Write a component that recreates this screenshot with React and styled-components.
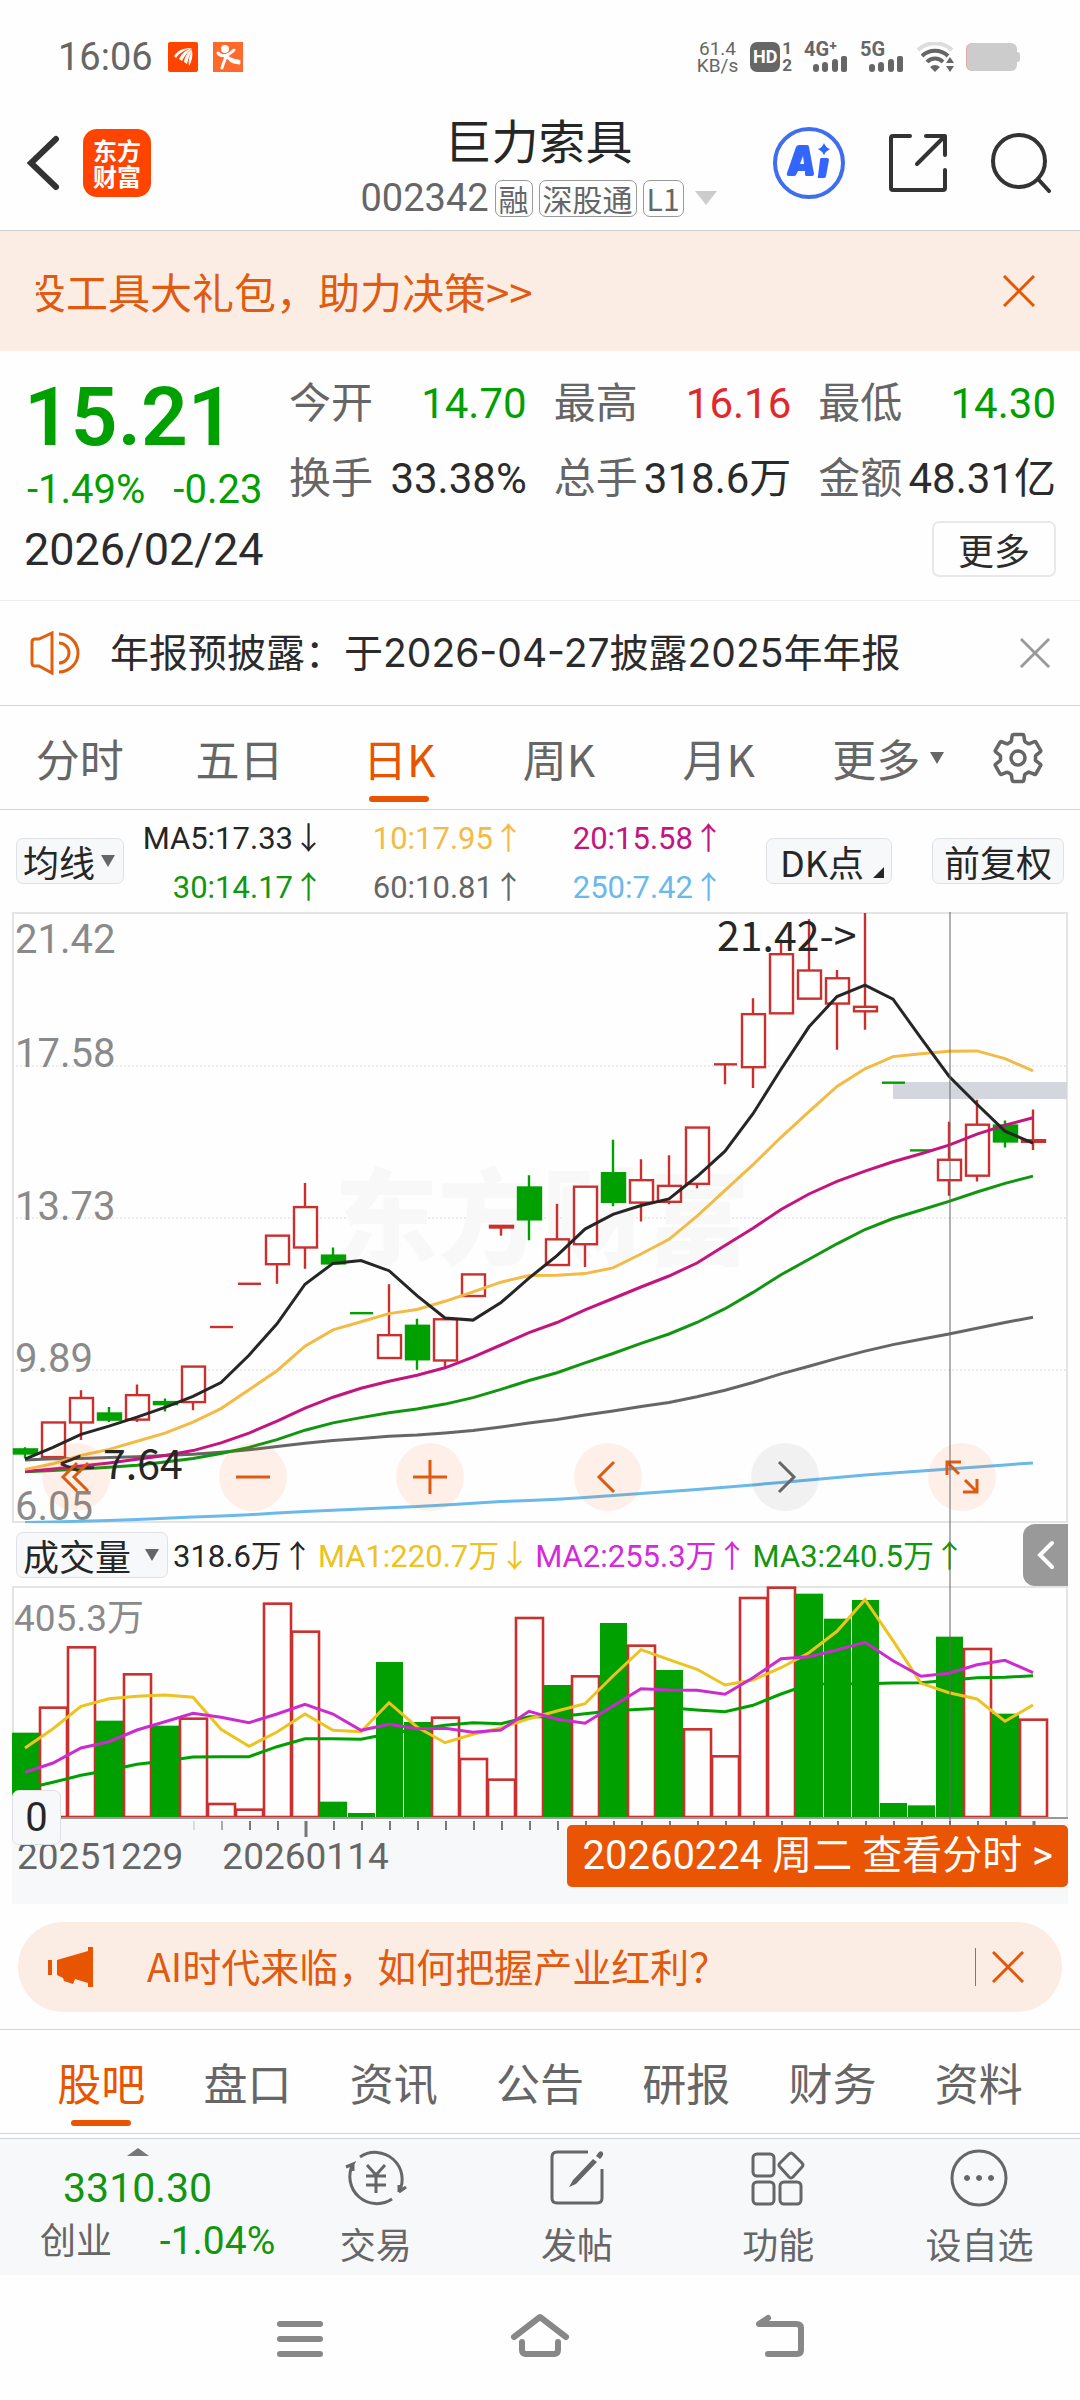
import React, { useState } from "react";
import styled, { createGlobalStyle } from "styled-components";
import { IoSettingsOutline } from "react-icons/io5";

const RED = "#c9302e";
const GREEN = "#00a000";
const ORANGE = "#e85400";
const NUMBERS = '"Roboto", "Noto Sans CJK SC", sans-serif';

// x of the first bar and the distance between two bars
const FIRST = 13;
const STEP = 28;

// [color, high, top, bottom, low], levels counted down from the top (28 = 21.42, 1521 = 6.05)
const candles = [
	["g", 1338, 1343, 1353, 1365],
	["r", 1277, 1277, 1362, 1362],
	["r", 1198, 1217, 1277, 1320],
	["g", 1239, 1255, 1270, 1276],
	["r", 1184, 1210, 1270, 1276],
	["g", 1218, 1227, 1232, 1250],
	["r", 1140, 1140, 1227, 1247],
	["r", 1043, 1043, 1043, 1043],
	["r", 937, 937, 937, 937],
	["r", 819, 819, 889, 937],
	["r", 690, 749, 848, 900],
	["g", 848, 868, 887, 887],
	["g", 1009, 1009, 1009, 1009],
	["r", 938, 1063, 1119, 1119],
	["g", 1023, 1040, 1122, 1148],
	["r", 1024, 1024, 1125, 1142],
	["r", 914, 914, 967, 967],
	["r", 795, 795, 799, 819],
	["g", 671, 701, 779, 830],
	["r", 741, 828, 891, 891],
	["r", 699, 699, 840, 896],
	["g", 584, 666, 736, 747],
	["r", 632, 683, 738, 784],
	["r", 622, 697, 736, 742],
	["r", 554, 554, 692, 703],
	["r", 399, 399, 399, 448],
	["r", 237, 276, 406, 457],
	["r", 93, 129, 274, 274],
	["r", 43, 169, 238, 238],
	["r", 168, 188, 250, 363],
	["r", 28, 258, 269, 314],
	["g", 444, 444, 444, 444],
	["g", 610, 610, 610, 610],
	["r", 540, 633, 683, 721],
	["r", 486, 547, 672, 686],
	["g", 537, 549, 588, 603],
	["r", 510, 585, 589, 609],
];

const priceLines = [
	{
		color: "#6bb9ea",
		values: [
			1522, 1521, 1519, 1517, 1515, 1512, 1509, 1506, 1503, 1499, 1495, 1492, 1489, 1486, 1483, 1479, 1475, 1471, 1468,
			1465, 1461, 1456, 1451, 1446, 1441, 1436, 1430, 1424, 1418, 1412, 1406, 1401, 1396, 1391, 1386, 1381, 1376,
		],
	},
	{
		color: "#666",
		values: [
			1369, 1366, 1365, 1363, 1361, 1358, 1355, 1350, 1344, 1336, 1328, 1321, 1316, 1311, 1308, 1303, 1297, 1288, 1278,
			1270, 1259, 1249, 1238, 1228, 1214, 1198, 1179, 1158, 1139, 1120, 1102, 1086, 1073, 1060, 1046, 1032, 1019,
		],
	},
	{
		color: "#12960f",
		values: [
			1398, 1395, 1391, 1387, 1382, 1374, 1365, 1353, 1338, 1319, 1296, 1278, 1265, 1253, 1244, 1232, 1216, 1196, 1174,
			1155, 1131, 1108, 1083, 1060, 1032, 998, 958, 915, 877, 839, 804, 777, 756, 735, 712, 691, 673,
		],
	},
	{
		color: "#c4157f",
		values: [
			1397, 1391, 1384, 1376, 1367, 1358, 1346, 1327, 1303, 1274, 1242, 1215, 1193, 1176, 1161, 1143, 1117, 1087, 1057,
			1032, 1001, 973, 945, 918, 886, 843, 801, 755, 717, 686, 661, 638, 618, 597, 570, 548, 530,
		],
	},
	{
		color: "#f3bb45",
		values: [
			1392, 1378, 1358, 1343, 1323, 1303, 1276, 1243, 1197, 1150, 1090, 1050, 1030, 1010, 1000, 980, 957, 933, 917, 916,
			912, 898, 864, 828, 771, 708, 645, 578, 515, 453, 410, 380, 373, 367, 366, 385, 415,
		],
	},
	{
		color: "#262626",
		values: [
			1367, 1338, 1306, 1286, 1264, 1240, 1213, 1179, 1112, 1035, 938, 887, 880, 905, 966, 1021, 1026, 983, 923, 868, 803,
			767, 745, 729, 674, 612, 520, 411, 307, 233, 205, 239, 335, 428, 497, 563, 592,
		],
	},
];

// [color, top], 225 = 405.3万, 918 = 0
const volumes = [
	["g", 662], ["r", 587], ["r", 406], ["g", 626], ["r", 487], ["g", 641], ["r", 620], ["r", 876], ["r", 893],
	["r", 275], ["r", 359], ["g", 869], ["g", 903], ["g", 450], ["g", 630], ["r", 617], ["r", 741], ["r", 803],
	["r", 318], ["g", 519], ["r", 493], ["g", 333], ["r", 401], ["g", 474], ["r", 652], ["r", 733], ["r", 258],
	["r", 227], ["g", 245], ["g", 320], ["g", 264], ["g", 873], ["g", 880], ["g", 374], ["r", 411], ["g", 605],
	["r", 623],
];

const volumeLines = [
	{
		color: GREEN,
		values: [
			830, 811, 790, 775, 757, 747, 735, 734, 734, 704, 680, 680, 682, 665, 652, 640, 632, 635, 614, 614, 605, 596, 592,
			587, 594, 599, 580, 546, 517, 515, 515, 513, 512, 505, 497, 496, 491,
		],
	},
	{
		color: "#edc31f",
		values: [
			708, 650, 583, 560, 553, 549, 556, 652, 703, 660, 606, 655, 659, 572, 645, 692, 667, 648, 620, 597, 575, 492, 413,
			443, 472, 519, 504, 467, 422, 358, 263, 386, 514, 542, 561, 628, 579,
		],
	},
	{
		color: "#cc2bcf",
		values: [
			781, 753, 708, 689, 654, 629, 604, 616, 632, 606, 577, 606, 655, 637, 650, 649, 661, 654, 598, 622, 634, 582, 530,
			534, 535, 547, 497, 440, 434, 414, 391, 446, 493, 484, 458, 445, 482,
		],
	},
];

const quotes = [
	{ label: "今开", value: "14.70", color: "#00a000" },
	{ label: "最高", value: "16.16", color: "#e02a2a" },
	{ label: "最低", value: "14.30", color: "#00a000" },
	{ label: "换手", value: "33.38%", color: "#2b2b2b" },
	{ label: "总手", value: "318.6万", color: "#2b2b2b" },
	{ label: "金额", value: "48.31亿", color: "#2b2b2b" },
];

const averages = [
	{ text: "MA5:17.33", arrow: "↓", color: "#262626" },
	{ text: "10:17.95", arrow: "↑", color: "#f3bb45" },
	{ text: "20:15.58", arrow: "↑", color: "#c4157f" },
	{ text: "30:14.17", arrow: "↑", color: "#12960f" },
	{ text: "60:10.81", arrow: "↑", color: "#666" },
	{ text: "250:7.42", arrow: "↑", color: "#6bb9ea" },
];

const volumeLegend = [
	{ text: "318.6万", arrow: "↑", color: "#262626" },
	{ text: "MA1:220.7万", arrow: "↓", color: "#edc31f" },
	{ text: "MA2:255.3万", arrow: "↑", color: "#d42bd8" },
	{ text: "MA3:240.5万", arrow: "↑", color: "#12960f" },
];

const priceLabels = [
	{ text: "21.42", y: 41 },
	{ text: "17.58", y: 155 },
	{ text: "13.73", y: 308 },
	{ text: "9.89", y: 460 },
	{ text: "6.05", y: 608 },
];

const periods = ["分时", "五日", "日K", "周K", "月K"];
const sections = ["股吧", "盘口", "资讯", "公告", "研报", "财务", "资料"];

const barX = (i) => FIRST + STEP * i;
const priceY = (v) => ((v - 28) / 1493) * 609 + 1;
const volumeY = (v) => (v - 225) / 3 + 1;
const toPoints = (values, scale) => values.map((v, i) => `${barX(i)},${scale(v).toFixed(1)}`).join(" ");

function CloseIcon({ size, color }) {
	return (
		<svg width={size} height={size} viewBox='0 0 32 32' fill='none' stroke={color} strokeWidth='3'>
			<path d='M1 1L31 31M31 1L1 31' />
		</svg>
	);
}

function Signal() {
	return (
		<svg width='36' height='16' viewBox='0 0 36 16' fill='#666'>
			<rect x='1' y='8' width='6' height='8' rx='3' />
			<rect x='10' y='6' width='6' height='10' rx='3' />
			<rect x='20' y='3' width='6' height='13' rx='3' />
			<rect x='29' y='0' width='6' height='16' rx='2' />
		</svg>
	);
}

function StatusBar() {
	return (
		<StStatus>
			<StClock>16:06</StClock>
			<svg width='30' height='30' viewBox='0 0 30 30'>
				<rect width='30' height='30' rx='2' fill='#ff4400' />
				<path d='M6 14C10 8 16 6 23 6 17 8 11 11 8 16ZM11 17C14 11 18 8 24 6 20 10 16 14 14 19ZM16 20C17 14 20 10 24 7 22 12 20 17 19 22ZM21 24C20 18 22 12 24 8 25 14 24 19 21 24Z' fill='#fff' />
			</svg>
			<svg width='30' height='30' viewBox='0 0 30 30'>
				<rect width='30' height='30' fill='#ff6a2c' />
				<circle cx='12' cy='7' r='4' fill='#fff' />
				<path d='M5 11C8 15 14 15 21 8M14 15C18 18 23 19 26 19M13 15C11 20 10 22 9 26M16 16C18 20 21 20 26 21' fill='none' stroke='#fff' strokeWidth='3' strokeLinecap='round' />
			</svg>
			<StStatusRight>
				<StSpeed>
					<span>61.4</span>
					<span>KB/s</span>
				</StSpeed>
				<StHd>HD</StHd>
				<StSims>
					<span>1</span>
					<span>2</span>
				</StSims>
				<StNet>
					<span>4G⁺</span>
					<Signal />
				</StNet>
				<StNet>
					<span>5G</span>
					<Signal />
				</StNet>
				<svg width='38' height='30' viewBox='0 0 38 30' fill='none' strokeWidth='4'>
					<path d='M2 8A25 25 0 0 1 36 8' stroke='#ddd' />
					<path d='M6 14A19 19 0 0 1 32 14' stroke='#666' />
					<path d='M11 20A11 11 0 0 1 27 20' stroke='#666' />
					<path d='M14 25Q19 21 24 25L19 30Z' fill='#666' />
					<path d='M30 21L34 15 38 21ZM30 24H38L34 30Z' fill='#666' />
				</svg>
				<svg width='54' height='28' viewBox='0 0 54 28'>
					<rect width='14' height='28' rx='6' fill='#e8a8a4' />
					<rect x='1' width='50' height='28' rx='6' fill='#ccc' />
					<rect x='48' y='9' width='6' height='10' rx='3' fill='#ccc' />
				</svg>
			</StStatusRight>
		</StStatus>
	);
}

function Header() {
	return (
		<StHeader>
			<StHeaderSide>
				<StIconButton aria-label='返回'>
					<svg width='34' height='56' viewBox='0 0 34 56' fill='none' stroke='#333' strokeWidth='6' strokeLinecap='round'>
						<path d='M30 4L5 28 30 52' />
					</svg>
				</StIconButton>
				<StLogo>
					东方
					<br />
					财富
				</StLogo>
			</StHeaderSide>
			<StTitleBox>
				<h1>巨力索具</h1>
				<StCode>
					<span>002342</span>
					<StTag>融</StTag>
					<StTag>深股通</StTag>
					<StTag>L1</StTag>
					<svg width='22' height='14' viewBox='0 0 22 14' fill='#ccc'>
						<path d='M0 0H22L11 14Z' />
					</svg>
				</StCode>
			</StTitleBox>
			<StHeaderSide $end>
				<StIconButton aria-label='Ai'>
					<svg width='72' height='72' viewBox='0 0 72 72'>
						<circle cx='36' cy='36' r='34' fill='none' stroke='#3f6df0' strokeWidth='4' />
						<path fillRule='evenodd' d='M23 20Q24 18 26 18H34Q36 18 36 20L41 47Q41 49 39 49H33Q32 49 32 47V44H25L23 48Q22 49 21 49H16Q13 49 14 46ZM27 37H31L30 29Z' fill='#3366ff' />
						<path d='M48 31H54Q56 31 56 33L53 49Q53 51 51 51H46Q44 51 45 49L47 33Q47 31 48 31Z' fill='#3366ff' />
						<path d='M51 16Q53 21 57 22 53 24 51 28 49 24 45 22 49 21 51 16Z' fill='#3366ff' />
					</svg>
				</StIconButton>
				<StIconButton aria-label='分享'>
					<svg width='60' height='60' viewBox='0 0 60 60' fill='none' stroke='#333' strokeWidth='4' strokeLinecap='round' strokeLinejoin='round'>
						<path d='M22 3H5Q3 3 3 5V55Q3 57 5 57H55Q57 57 57 55V37M38 3H57V22M57 3L29 31' />
					</svg>
				</StIconButton>
				<StIconButton aria-label='搜索'>
					<svg width='60' height='60' viewBox='0 0 60 60' fill='none' stroke='#333' strokeWidth='4' strokeLinecap='round'>
						<circle cx='28' cy='28' r='26' />
						<path d='M47 46L58 58' />
					</svg>
				</StIconButton>
			</StHeaderSide>
		</StHeader>
	);
}

function PriceChart() {
	return (
		<StChart viewBox='0 0 1056 611'>
			{[154, 306, 458].map((y) => (
				<path key={y} d={`M0 ${y}H1056`} stroke='#d8d8d8' strokeDasharray='2 2' />
			))}
			<rect x='1' y='1' width='1054' height='609' fill='none' stroke='#e4e4e4' strokeWidth='2' />
			<StWatermark x='322' y='345'>
				东方财富
			</StWatermark>
			<rect x='881' y='170' width='174' height='17' fill='#d3d6dc' />
			{candles.map(([kind, high, top, bottom, low], i) => {
				const color = kind === "r" ? RED : GREEN;
				const x = barX(i);
				const height = priceY(bottom) - priceY(top);
				return (
					<g key={i} stroke={color} strokeWidth='2.4'>
						<path d={`M${x} ${priceY(high)}V${priceY(top)}M${x} ${priceY(bottom)}V${priceY(low)}`} />
						{height < 1 ? (
							<path d={`M${x - 11} ${priceY(top)}h23`} />
						) : (
							<rect x={x - 11} y={priceY(top)} width='23' height={height} fill={kind === "r" ? "#fff" : GREEN} />
						)}
					</g>
				);
			})}
			{priceLabels.map((label) => (
				<StAxisText key={label.text} x='3' y={label.y}>
					{label.text}
				</StAxisText>
			))}
			{priceLines.map((line) => (
				<polyline key={line.color} points={toPoints(line.values, priceY)} fill='none' stroke={line.color} strokeWidth='3' />
			))}
			<StMarkText x='705' y='39'>
				21.42-&gt;
			</StMarkText>
			<StMarkText x='47' y='567'>
				&lt;-
			</StMarkText>
			<StMarkText x='91' y='567'>
				7.64
			</StMarkText>
		</StChart>
	);
}

function VolumeChart() {
	return (
		<StChart viewBox='0 0 1056 233'>
			<path d='M1 232V1H1055V232' fill='none' stroke='#e4e4e4' strokeWidth='2' />
			{volumes.map(([kind, top], i) =>
				kind === "r" ? (
					<rect key={i} x={barX(i) - 13} y={volumeY(top)} width='27' height={231 - volumeY(top)} fill='none' stroke={RED} strokeWidth='2.6' />
				) : (
					<rect key={i} x={barX(i) - 13} y={volumeY(top)} width='27' height={232 - volumeY(top)} fill={GREEN} />
				)
			)}
			<StAxisText x='2' y='45' $small>
				405.3万
			</StAxisText>
			{volumeLines.map((line) => (
				<polyline key={line.color} points={toPoints(line.values, volumeY)} fill='none' stroke={line.color} strokeWidth='3' />
			))}
			<path d='M0 232H1056' stroke='#999' strokeWidth='2' />
		</StChart>
	);
}

function ChartControls() {
	return (
		<StControls>
			<StRound aria-label='最左'>
				<svg width='34' height='34' viewBox='0 0 34 34'>
					<path d='M18 3L4 17 18 31M29 3L15 17 29 31' />
				</svg>
			</StRound>
			<StRound aria-label='缩小'>
				<svg width='34' height='34' viewBox='0 0 34 34'>
					<path d='M0 17H34' />
				</svg>
			</StRound>
			<StRound aria-label='放大'>
				<svg width='34' height='34' viewBox='0 0 34 34'>
					<path d='M0 17H34M17 0V34' />
				</svg>
			</StRound>
			<StRound aria-label='左移'>
				<svg width='34' height='34' viewBox='0 0 34 34'>
					<path d='M23 2L8 17 23 32' />
				</svg>
			</StRound>
			<StRound aria-label='右移' $gray>
				<svg width='34' height='34' viewBox='0 0 34 34'>
					<path d='M11 2L26 17 11 32' />
				</svg>
			</StRound>
			<StRound aria-label='全屏'>
				<svg width='34' height='34' viewBox='0 0 34 34'>
					<path d='M2 15V2H16M2 2L14 14M32 19V32H18M32 32L20 20' />
				</svg>
			</StRound>
		</StControls>
	);
}

function DateAxis() {
	return (
		<StDates>
			<svg width='100%' viewBox='0 0 1056 18'>
				{candles.map((_, i) =>
					i < 6 ? null : (
						<path
							key={i}
							d={`M${barX(i) + 1} 2V${i === 10 ? 18 : 11}`}
							stroke='#777'
							strokeWidth={i === 10 || i === 36 ? 3 : 2}
							opacity={i === 6 ? 0.2 : i === 7 ? 0.6 : 1}
						/>
					)
				)}
			</svg>
			<StDateRow>
				<span>20251229</span>
				<span>20260114</span>
			</StDateRow>
			<StZero>0</StZero>
			<StDayButton>20260224 周二 查看分时 &gt;</StDayButton>
		</StDates>
	);
}

function BottomBar() {
	return (
		<StBottom>
			<StIndex>
				<svg width='22' height='8' viewBox='0 0 22 8' fill='#77777a'>
					<path d='M0 8L11 0 22 8Z' />
				</svg>
				<strong>3310.30</strong>
				<div>
					<span>创业</span>
					<em>-1.04%</em>
				</div>
			</StIndex>
			<StBottomItem>
				<svg width='66' height='58' viewBox='0 0 66 58'>
					<path d='M17 8A27 27 0 0 1 56 43L63 38M56 43V36' />
					<path d='M49 50A27 27 0 0 1 10 15L3 18M10 15V22' />
					<path d='M24 16L33 26 42 16M33 26V44M23 27H43M23 36H43' />
				</svg>
				交易
			</StBottomItem>
			<StBottomItem>
				<svg width='56' height='58' viewBox='0 0 56 58'>
					<path d='M39 3H8Q3 3 3 8V49Q3 54 8 54H48Q53 54 53 49V20' />
					<path d='M44 10L24 31 20 38 27 35 48 13ZM47 7L50 3Q53 1 54 4 55 6 51 10Z' fill='#666' stroke='none' />
				</svg>
				发帖
			</StBottomItem>
			<StBottomItem>
				<svg width='56' height='58' viewBox='0 0 56 58'>
					<rect x='3' y='5' width='21' height='22' rx='4' />
					<rect x='3' y='33' width='21' height='22' rx='4' />
					<rect x='30' y='33' width='21' height='22' rx='4' />
					<path d='M39 5Q41 3 43 5L52 14Q54 16 52 18L43 28Q41 30 39 28L30 18Q28 16 30 14Z' />
				</svg>
				功能
			</StBottomItem>
			<StBottomItem>
				<svg width='58' height='58' viewBox='0 0 58 58'>
					<circle cx='29' cy='29' r='27' />
					<path d='M17 26a3 3 0 1 0 .1 0M29 26a3 3 0 1 0 .1 0M41 26a3 3 0 1 0 .1 0' fill='#666' stroke='none' />
				</svg>
				设自选
			</StBottomItem>
		</StBottom>
	);
}

function App() {
	const [period, setPeriod] = useState("日K");
	const [section, setSection] = useState("股吧");

	return (
		<>
			<GlobalStyle />
			<StatusBar />
			<Header />
			<StBanner>
				<StTicker>
					<a href='#gift'>投工具大礼包，助力决策&gt;&gt;</a>
				</StTicker>
				<StIconButton aria-label='关闭'>
					<CloseIcon size={32} color={ORANGE} />
				</StIconButton>
			</StBanner>

			<StQuote>
				<StQuoteTop>
					<StPrice>
						<strong>15.21</strong>
						<div>
							<span>-1.49%</span>
							<span>-0.23</span>
						</div>
					</StPrice>
					<StQuoteGrid>
						{quotes.map((q) => (
							<StQuoteItem key={q.label} $color={q.color}>
								<span>{q.label}</span>
								<b>{q.value}</b>
							</StQuoteItem>
						))}
					</StQuoteGrid>
				</StQuoteTop>
				<StQuoteBottom>
					<span>2026/02/24</span>
					<StMore>更多</StMore>
				</StQuoteBottom>
			</StQuote>

			<StNotice>
				<svg width='50' height='44' viewBox='0 0 50 44' fill='none' stroke='#e06010' strokeWidth='3'>
					<path d='M2 11Q2 8 5 8H9L22 2V42L9 35H5Q2 35 2 32Z' />
					<path d='M29 12A10 10 0 0 1 29 32M29 3A19 19 0 0 1 29 41' />
				</svg>
				<p>年报预披露：于2026-04-27披露2025年年报</p>
				<StIconButton aria-label='关闭'>
					<CloseIcon size={30} color='#999' />
				</StIconButton>
			</StNotice>

			<StPeriods>
				{periods.map((name) => (
					<StTab key={name} $active={name === period} onClick={() => setPeriod(name)}>
						{name}
					</StTab>
				))}
				<StTab>
					更多
					<svg width='14' height='12' viewBox='0 0 14 12' fill='#666'>
						<path d='M0 0H14L7 12Z' />
					</svg>
				</StTab>
				<StIconButton aria-label='设置'>
					<IoSettingsOutline size={56} color='#666' />
				</StIconButton>
			</StPeriods>

			<StAverageRow>
				<StSelectBox>
					<select aria-label='均线' defaultValue='均线'>
						<option>均线</option>
					</select>
					<svg width='14' height='12' viewBox='0 0 14 12' fill='#666'>
						<path d='M0 0H14L7 12Z' />
					</svg>
				</StSelectBox>
				<StAverages>
					{averages.map((a) => (
						<StLegend key={a.text} $color={a.color}>
							{a.text}
							<i>{a.arrow}</i>
						</StLegend>
					))}
				</StAverages>
				<StChip>
					DK点
					<svg width='11' height='11' viewBox='0 0 11 11' fill='#262626'>
						<path d='M11 0V11H0Z' />
					</svg>
				</StChip>
				<StChip>前复权</StChip>
			</StAverageRow>

			<StCharts>
				<StChartArea>
					<PriceChart />
					<ChartControls />
				</StChartArea>
				<StVolumeHead>
					<StSelectBox $wide>
						<select aria-label='指标' defaultValue='成交量'>
							<option>成交量</option>
						</select>
						<svg width='14' height='12' viewBox='0 0 14 12' fill='#666'>
							<path d='M0 0H14L7 12Z' />
						</svg>
					</StSelectBox>
					{volumeLegend.map((v) => (
						<StLegend key={v.text} $color={v.color}>
							{v.text}
							<i>{v.arrow}</i>
						</StLegend>
					))}
					<StFold aria-label='展开'>
						<svg width='18' height='30' viewBox='0 0 18 30' fill='none' stroke='#fff' strokeWidth='4' strokeLinecap='round'>
							<path d='M15 3L3 15 15 27' />
						</svg>
					</StFold>
				</StVolumeHead>
				<VolumeChart />
				<DateAxis />
				<StCrossLine />
			</StCharts>

			<StPromo>
				<svg width='46' height='40' viewBox='0 0 46 40' fill={ORANGE}>
					<path d='M0 13H4V28H0ZM9 13L40 4V0H45V40H40V36L27 32 25 37 16 34 15 31 9 28Z' />
				</svg>
				<a href='#ai'>AI时代来临，如何把握产业红利？</a>
				<StPromoClose aria-label='关闭'>
					<CloseIcon size={32} color={ORANGE} />
				</StPromoClose>
			</StPromo>

			<StSections>
				{sections.map((name) => (
					<StTab key={name} $active={name === section} onClick={() => setSection(name)}>
						{name}
					</StTab>
				))}
			</StSections>

			<BottomBar />

			<StSystemNav>
				<StIconButton aria-label='菜单'>
					<svg width='60' height='46' viewBox='0 0 60 46'>
						<path d='M10 11H50M10 26H50M10 41H50' />
					</svg>
				</StIconButton>
				<StIconButton aria-label='主页'>
					<svg width='60' height='46' viewBox='0 0 60 46'>
						<path d='M4 24L30 4 56 24M12 29V37Q12 41 16 41H44Q48 41 48 37V29' />
					</svg>
				</StIconButton>
				<StIconButton aria-label='后退'>
					<svg width='60' height='46' viewBox='0 0 60 46'>
						<path d='M18 5L9 11H46Q51 11 51 15V37Q51 41 47 41H18' />
					</svg>
				</StIconButton>
			</StSystemNav>
		</>
	);
}

export default App;

const GlobalStyle = createGlobalStyle`
	* {
		box-sizing: border-box;
	}
	body {
		margin: 0;
		background-color: #fefefe;
		color: #2b2b2b;
		font-family: "Noto Sans CJK SC", "Noto Sans", sans-serif;
	}
	button, select {
		margin: 0;
		padding: 0;
		border: none;
		background: none;
		color: inherit;
		font: inherit;
		cursor: pointer;
	}
	h1, p {
		margin: 0;
		font-weight: 400;
	}
	a {
		color: inherit;
		text-decoration: none;
	}
	svg {
		display: block;
		flex-shrink: 0;
	}
`;

const StStatus = styled.div`
	display: flex;
	align-items: center;
	gap: 15px;
	height: 94px;
	padding: 20px 60px 0 58px;
	color: #666;
	font-family: ${NUMBERS};
`;

const StClock = styled.span`
	font-size: 38px;
	line-height: 40px;
`;

const StStatusRight = styled.div`
	display: flex;
	align-items: center;
	gap: 12px;
	margin-left: auto;
`;

const StSpeed = styled.span`
	display: flex;
	flex-direction: column;
	align-items: center;
	font-size: 19px;
	line-height: 17px;
`;

const StHd = styled.span`
	width: 30px;
	border-radius: 7px;
	background-color: #666;
	color: white;
	font-size: 18px;
	font-weight: 700;
	line-height: 30px;
	text-align: center;
`;

const StSims = styled.span`
	display: flex;
	flex-direction: column;
	margin-left: -10px;
	font-size: 17px;
	font-weight: 700;
	line-height: 17px;
`;

const StNet = styled.span`
	display: flex;
	flex-direction: column;
	font-size: 20px;
	font-weight: 700;
	line-height: 14px;

	svg {
		margin-left: 8px;
	}
`;

const StHeader = styled.header`
	display: flex;
	align-items: center;
	height: 137px;
	padding: 2px 29px 0 26px;
	border-bottom: 1px solid #cfcfcf;
`;

const StHeaderSide = styled.div`
	display: flex;
	flex: 1;
	align-items: center;
	justify-content: ${(props) => (props.$end ? "flex-end" : "flex-start")};
	gap: ${(props) => (props.$end ? "43px" : "23px")};
`;

const StIconButton = styled.button`
	display: flex;
	align-items: center;
	justify-content: center;
`;

const StLogo = styled.div`
	width: 68px;
	padding: 8px 0;
	border-radius: 14px;
	background-color: #ff4400;
	color: white;
	font-size: 24px;
	font-weight: 700;
	line-height: 26px;
	text-align: center;
`;

const StTitleBox = styled.div`
	display: flex;
	flex-direction: column;
	align-items: center;
	padding-top: 12px;

	h1 {
		color: #262626;
		font-size: 47px;
		line-height: 58px;
	}
`;

const StCode = styled.div`
	display: flex;
	align-items: center;
	gap: 6px;
	color: #666;
	font-size: 38px;
	line-height: 60px;

	> span:first-child {
		font-family: ${NUMBERS};
	}
	svg {
		margin-left: 5px;
	}
`;

const StTag = styled.span`
	padding: 0 3px;
	border: 1px solid #999;
	border-radius: 7px;
	font-size: 30px;
	line-height: 35px;
`;

const StBanner = styled.div`
	display: flex;
	align-items: center;
	justify-content: space-between;
	height: 120px;
	padding: 0 45px 0 36px;
	background-color: #fcede4;
	color: #e05a10;
	font-size: 42px;
`;

const StTicker = styled.div`
	overflow: hidden;
	line-height: 60px;
	white-space: nowrap;

	a {
		margin-left: -12px;
	}
`;

const StQuote = styled.section`
	padding: 11px 24px 14px;
	border-bottom: 1px solid #ececec;
`;

const StQuoteTop = styled.div`
	display: flex;
	justify-content: space-between;
	gap: 24px;
`;

const StPrice = styled.div`
	display: flex;
	flex-direction: column;
	color: ${GREEN};
	font-family: ${NUMBERS};

	strong {
		font-size: 82px;
		font-weight: 600;
		line-height: 110px;
	}
	div {
		display: flex;
		gap: 28px;
		padding-left: 3px;
		font-size: 40px;
		line-height: 36px;
	}
`;

const StQuoteGrid = styled.div`
	display: grid;
	flex: 1;
	grid-template-columns: repeat(3, 1fr);
	grid-auto-rows: 75px;
	column-gap: 27px;
	max-width: 767px;
`;

const StQuoteItem = styled.div`
	display: flex;
	align-items: baseline;
	justify-content: space-between;
	color: #666;
	font-size: 42px;
	line-height: 75px;
	white-space: nowrap;

	b {
		color: ${(props) => props.$color};
		font-family: ${NUMBERS};
		font-weight: 400;
	}
`;

const StQuoteBottom = styled.div`
	display: flex;
	align-items: center;
	justify-content: space-between;
	height: 74px;

	span {
		font-family: ${NUMBERS};
		font-size: 45px;
	}
`;

const StMore = styled.button`
	padding: 0 24px;
	border: 2px solid #e6e8ea;
	border-radius: 7px;
	font-size: 36px;
	line-height: 52px;
`;

const StNotice = styled.div`
	display: flex;
	align-items: center;
	height: 105px;
	padding: 0 30px;
	border-bottom: 1px solid #d4d4d4;
	font-size: 39px;

	p {
		flex: 1;
		margin-left: 30px;
		font-family: "Inter", "Noto Sans CJK SC", sans-serif;
		line-height: 60px;
	}
`;

const StPeriods = styled.nav`
	display: grid;
	grid-template-columns: repeat(5, 16fr) 18fr 8fr;
	height: 104px;
	padding-right: 22px;
	border-bottom: 1px solid #d4d4d4;
`;

const StTab = styled.button`
	position: relative;
	display: flex;
	align-items: center;
	justify-content: center;
	gap: 10px;
	color: ${(props) => (props.$active ? ORANGE : "#666")};
	font-size: 44px;

	&::after {
		content: "";
		display: ${(props) => (props.$active ? "block" : "none")};
		position: absolute;
		bottom: 7px;
		left: 50%;
		width: 60px;
		height: 6px;
		margin-left: -30px;
		border-radius: 3px;
		background-color: ${ORANGE};
	}
`;

const StAverageRow = styled.div`
	display: flex;
	align-items: center;
	height: 102px;
	padding: 0 16px;
`;

const StSelectBox = styled.label`
	display: flex;
	align-items: center;
	width: ${(props) => (props.$wide ? "152px" : "108px")};
	height: 46px;
	padding: 0 8px 0 6px;
	border: 1px solid #dfe1e6;
	border-radius: 7px;
	background-color: #f7f8fa;
	color: #262626;
	font-size: 36px;

	select {
		flex: 1;
		appearance: none;
		line-height: 44px;
	}
`;

const StAverages = styled.div`
	display: grid;
	flex: 1;
	grid-template-columns: repeat(3, 1fr);
	justify-items: end;
	margin-right: 42px;
`;

const StLegend = styled.span`
	padding-top: 4px;
	color: ${(props) => props.$color};
	font-family: ${NUMBERS};
	font-size: 31px;
	line-height: 45px;
	white-space: nowrap;

	i {
		font-style: normal;
	}
`;

const StChip = styled.button`
	display: flex;
	align-items: flex-end;
	gap: 9px;
	height: 46px;
	padding: 0 7px 0 13px;
	border: 1px solid #dfe1e6;
	border-radius: 7px;
	background-color: #f7f8fa;
	color: #262626;
	font-size: 36px;
	line-height: 44px;
	white-space: nowrap;

	& + & {
		margin-left: 40px;
		padding: 0 11px;
	}
	svg {
		margin-bottom: 5px;
	}
`;

const StCharts = styled.div`
	position: relative;
	margin: 0 12px;
`;

const StChartArea = styled.div`
	position: relative;
`;

const StChart = styled.svg`
	width: 100%;
`;

const StWatermark = styled.text`
	fill: #f8f8f8;
	font-size: 104px;
	font-weight: 900;
`;

const StAxisText = styled.text`
	fill: #8a8a8a;
	font-family: ${NUMBERS};
	font-size: ${(props) => (props.$small ? "37px" : "40px")};
`;

const StMarkText = styled.text`
	fill: #262626;
	font-size: 41px;
`;

const StControls = styled.div`
	display: flex;
	position: absolute;
	right: 72px;
	bottom: 12px;
	left: 30px;
	justify-content: space-between;
`;

const StRound = styled.button`
	display: flex;
	align-items: center;
	justify-content: center;
	width: 68px;
	height: 68px;
	border-radius: 100%;
	background-color: ${(props) => (props.$gray ? "rgba(0, 0, 0, 0.05)" : "rgba(250, 100, 20, 0.09)")};

	svg {
		fill: none;
		stroke: ${(props) => (props.$gray ? "#666" : "#dd5a12")};
		stroke-width: 3px;
	}
`;

const StVolumeHead = styled.div`
	display: flex;
	align-items: center;
	gap: 5px;
	height: 63px;
	padding-left: 4px;
`;

const StFold = styled.button`
	display: flex;
	align-items: center;
	justify-content: center;
	width: 45px;
	height: 62px;
	margin-left: auto;
	border-radius: 12px 0 0 12px;
	background-color: #999;
`;

const StCrossLine = styled.div`
	position: absolute;
	top: 0;
	bottom: 80px;
	left: 88.7%;
	width: 2px;
	background-color: rgba(100, 100, 100, 0.5);
	pointer-events: none;
`;

const StDates = styled.div`
	position: relative;
	height: 85px;
	background-color: #f7f8fa;
`;

const StDateRow = styled.div`
	display: flex;
	gap: 39px;
	padding-left: 5px;
	color: #666;
	font-family: ${NUMBERS};
	font-size: 37px;
	line-height: 40px;
`;

const StZero = styled.span`
	position: absolute;
	top: -29px;
	left: 0;
	width: 49px;
	border: 1px solid #dfe1e6;
	border-radius: 7px;
	background-color: #f7f8fa;
	color: #262626;
	font-family: ${NUMBERS};
	font-size: 40px;
	line-height: 53px;
	text-align: center;
`;

const StDayButton = styled.button`
	position: absolute;
	top: 6px;
	right: 0;
	padding: 0 15px;
	border-radius: 5px;
	background-color: #ea5504;
	color: white;
	font-family: ${NUMBERS};
	font-size: 40px;
	line-height: 62px;
`;

const StPromo = styled.div`
	display: flex;
	align-items: center;
	height: 90px;
	margin: 18px 18px 17px;
	padding: 0 38px 0 30px;
	border-radius: 45px;
	background-color: #fcede4;
	color: #e05a10;
	font-size: 39px;

	a {
		margin-left: 53px;
		padding-bottom: 4px;
		line-height: 60px;
	}
`;

const StPromoClose = styled.button`
	margin-left: auto;
	padding: 3px 0 3px 16px;
	border-left: 1px solid #e05a10;
`;

const StSections = styled.nav`
	display: grid;
	grid-template-columns: repeat(7, 1fr);
	height: 105px;
	padding: 0 28px;
	border-top: 1px solid #d4d4d4;
	border-bottom: 1px solid #d4d4d4;
`;

const StBottom = styled.footer`
	display: grid;
	grid-template-columns: 275fr repeat(4, 201fr);
	height: 137px;
	margin-top: 4px;
	border-top: 1px solid #cfd3d8;
	background-color: #f7f8fa;
	color: #666;
	font-size: 36px;
`;

const StIndex = styled.div`
	display: flex;
	flex-direction: column;
	align-items: center;
	padding: 9px 0 0 40px;

	strong {
		margin-right: 40px;
		color: #12960f;
		font-family: ${NUMBERS};
		font-size: 41px;
		font-weight: 400;
		line-height: 64px;
	}
	svg {
		margin-right: 40px;
	}
	div {
		display: flex;
		align-self: stretch;
		align-items: baseline;
		justify-content: space-between;
		line-height: 36px;
	}
	em {
		color: #12960f;
		font-family: ${NUMBERS};
		font-size: 39px;
		font-style: normal;
	}
`;

const StBottomItem = styled.button`
	display: flex;
	flex-direction: column;
	align-items: center;
	gap: 16px;
	padding-top: 10px;
	line-height: 40px;

	svg {
		fill: none;
		stroke: #666;
		stroke-width: 3px;
	}
`;

const StSystemNav = styled.nav`
	display: grid;
	grid-template-columns: repeat(3, 240px);
	justify-content: center;
	height: 122px;

	svg {
		fill: none;
		stroke: #888;
		stroke-width: 6px;
		stroke-linecap: round;
		stroke-linejoin: round;
	}
`;
